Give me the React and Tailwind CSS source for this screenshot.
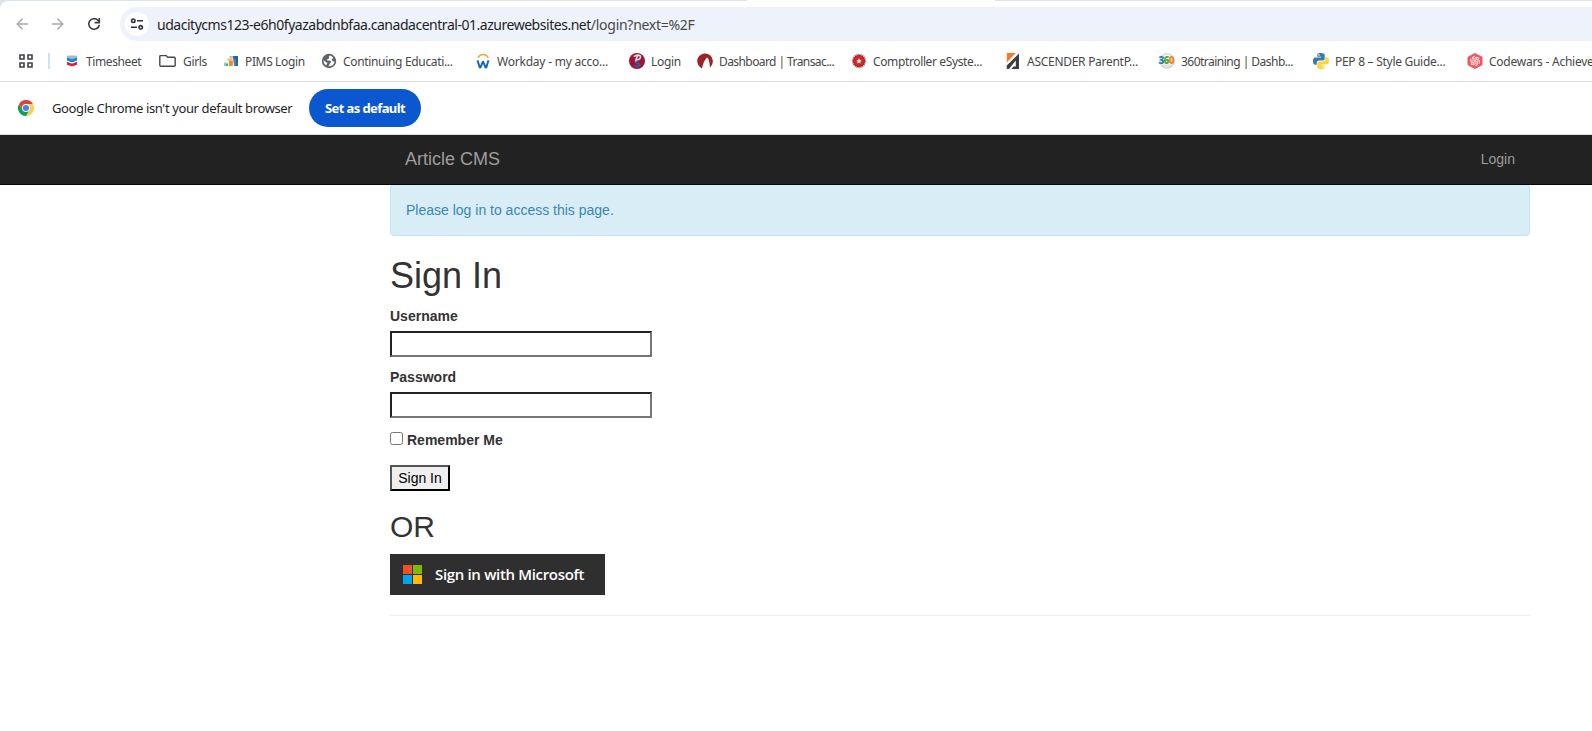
const Chevron = () => (
  <svg width="16" height="16" viewBox="0 0 16 16">
    <path d="M3 2.500h10v3L8 7 3 5.500z" fill="#a9bccb" />
    <path d="M3 4.500l5 1.800 5-1.800v3L8 9.500 3 7.500z" fill="#0a8fd4" />
    <path d="M3 8.800l5 1.900 5-1.900v3L8 13.600l-5-1.800z" fill="#d8213b" />
  </svg>
);

const Folder = () => (
  <svg className="overflow-visible" width="16" height="16" viewBox="0 0 16 16" fill="none" stroke="#474747" strokeWidth="1.400">
    <path d="M-1.200 4V12.200q0 1 1 1H13.200q1 0 1-1V5.300q0-1-1-1H6.800L5.200 2.600H-.2q-1 0-1 1z" />
  </svg>
);

const Pims = () => (
  <svg width="16" height="16" viewBox="0 0 16 16">
    <path d="M6.500 3H10v2.500H6.500z" fill="#a9c4dd" />
    <path d="M10 3h5v10h-4z" fill="#2d609b" />
    <path d="M11 6h2v7h-2z" fill="#4f81b5" />
    <path d="M4.500 5.500h5.200V13H6.500V8h-2z" fill="#f9b868" />
    <path d="M6 8h3.700v5H6z" fill="#f28c28" />
    <path d="M1 9.500h4V13H1z" fill="#8fd0c6" />
    <path d="M3 11h2v2H3z" fill="#3fa898" />
  </svg>
);

const Globe = () => (
  <svg width="16" height="16" viewBox="0 0 16 16">
    <circle cx="8" cy="8" r="7.200" fill="#5f6368" />
    <path d="M9.200 2.600c-1.600.4-1.800 1.500-.8 2.100-.3 1.200-1.900 1-2.500 1.900-.4.800.9 1 2 .9 1.500.1 2.500.7 2.300 1.800-.5.500-1.400.5-1.600 1.700-.2.900-.8 1.400-1.300 2.300 3.700.4 6-2 6.200-4.800-1.300.2-1.700-.5-2.300-1.100-.8-.7-.2-1.700.7-1.900.6-.2.200-1.500-2.700-2.900zM2.500 7.200c-.1 2 .7 4 2.900 5.200.3-1.200.3-1.900 1.100-2.500C5 9.600 4 7.800 2.500 7.200z" fill="#fff" />
  </svg>
);

const Workday = () => (
  <svg width="16" height="16" viewBox="0 0 16 16" fill="none">
    <path d="M2.900 4.900A5.700 5.700 0 0 1 13.300 4.900" stroke="#f5a425" strokeWidth="1.500" />
    <path d="M2.500 7.400l2.300 7.200h.6L8 8.400l2.600 6.200h.6l2.300-7.200" stroke="#1068b5" strokeWidth="1.900" strokeLinejoin="bevel" />
  </svg>
);

const LoginBadge = () => (
  <svg width="16" height="16" viewBox="0 0 16 16">
    <circle cx="8" cy="8" r="8" fill="#a31230" />
    <path d="M11.200 7.300q-4.200-.2-4.200 1.700t2.700 1.600q2.300 1.700-.6 2.700-2.900.5-3.600-1" fill="none" stroke="#2f5f9e" strokeWidth="1.900" />
    <path d="M4.800 3.600q3.300-2.400 6.400-.9 1.400 3-3 4.200M8.400 2.600L6.500 8.500" fill="none" stroke="#f3e4e8" strokeWidth="1.500" />
  </svg>
);

const Transact = () => (
  <svg width="16" height="16" viewBox="0 0 16 16">
    <path d="M5 15.400L3.200 14.300A7.800 7.800 0 1 1 14.200 13L12.900 14.400C12.800 11 12.200 8 11.200 5.800L10 4.400C7.500 7 5.800 11 5 15.400z" fill="#9b242b" />
  </svg>
);

const SEAL = Array.from({ length: 40 }, (_, i) => {
  const r = i % 2 ? 5.7 : 7.6;
  const a = (i * Math.PI) / 20;
  return `${(8 + r * Math.sin(a)).toFixed(2)},${(8 - r * Math.cos(a)).toFixed(2)}`;
}).join(" ");

const Seal = () => (
  <svg width="16" height="16" viewBox="0 0 16 16">
    <polygon points={SEAL} fill="#a32a2a" />
    <circle cx="8" cy="8" r="4.900" fill="#dd2424" />
    <path d="M8 5.300l.8 1.800 1.900.2-1.400 1.300.4 1.900L8 9.500l-1.700 1 .4-1.900-1.400-1.300 1.900-.2z" fill="#fff" />
  </svg>
);

const Ascender = () => (
  <svg width="16" height="16" viewBox="0 0 16 16">
    <path d="M1.800 0h9L1.800 9.600z" fill="#f47b2a" />
    <path d="M14 .4V16H6.500l2-2.600h2.300V7.500L3.900 16H1.800v-3.400z" fill="#3a3d41" />
  </svg>
);

const ThreeSixty = () => (
  <span className="relative block h-4 w-4">
    <svg className="absolute inset-0" width="16" height="16" viewBox="0 0 16 16">
      <circle cx="8" cy="8" r="7.200" fill="#f8f8f8" stroke="#c4c7ca" strokeWidth="1" />
      <path d="M2.500 12.200h11M4 14h8" stroke="#c4c7ca" strokeWidth=".8" />
    </svg>
    <span className="absolute top-[1px] left-[-0.5px] font-['Open_Sans',sans-serif] text-[10px] leading-[12px] font-extrabold tracking-[-0.8px]">
      <span className="text-[#1483c5]">3</span>
      <span className="text-[#55a630]">6</span>
      <span className="text-[#f58220]">0</span>
    </span>
  </span>
);

const Python = () => (
  <svg width="16" height="16" viewBox="0 0 16 16">
    <path d="M7.900 0C4.500 0 4.300 1.300 4.300 2.100v1.700h3.900v.6H2.300C.8 4.400 0 5.700 0 8c0 2.400.9 3.700 2.200 3.700h1.500V9.800c0-1.300 1-2.300 2.300-2.300h3.700c1.100 0 2-.9 2-2V2.100C11.700.7 10.400 0 7.900 0z" fill="#3b79ab" />
    <path d="M8.100 16c3.400 0 3.600-1.300 3.600-2.100v-1.700H7.800v-.6h5.900C15.200 11.600 16 10.300 16 8c0-2.400-.9-3.700-2.200-3.700h-1.500v1.900c0 1.300-1 2.300-2.300 2.300H6.300c-1.100 0-2 .9-2 2v3.400C4.300 15.300 5.600 16 8.100 16z" fill="#ffd43b" />
    <circle cx="6" cy="2" r=".8" fill="#fff" />
    <circle cx="10" cy="14" r=".8" fill="#fff" />
  </svg>
);

const Codewars = () => (
  <svg width="16" height="16" viewBox="0 0 16 16">
    <path d="M8 .5l7 3.700v7.600L8 15.500 1 11.800V4.200z" fill="#f4545c" stroke="#f4545c" strokeLinejoin="round" />
    <g fill="none" stroke="#ffe1e1" strokeWidth=".9">
      {[0, 60, 120, 180, 240, 300].map((a) => (
        <path key={a} transform={`rotate(${a} 8 8)`} d="M8 8q-1.600-1.500 0-3.200M8 4.800q1.900-1.500 3.600.3M6.300 6.200q-.6-2 1.500-3.400" />
      ))}
    </g>
  </svg>
);

const BOOKMARKS = [
  { label: "Timesheet", Icon: Chevron, width: "w-[97px]", tracking: "tracking-[-0.4px]" },
  { label: "Girls", Icon: Folder, width: "w-[62px]", tracking: "tracking-[-0.35px]" },
  { label: "PIMS Login", Icon: Pims, width: "w-[98px]", tracking: "tracking-[-0.36px]" },
  { label: "Continuing Educati...", Icon: Globe, width: "w-[154px]", tracking: "tracking-[-0.33px]" },
  { label: "Workday - my acco...", Icon: Workday, width: "w-[154px]", tracking: "tracking-[-0.22px]" },
  { label: "Login", Icon: LoginBadge, width: "w-[68px]", tracking: "tracking-[-0.3px]" },
  { label: "Dashboard | Transac...", Icon: Transact, width: "w-[154px]", tracking: "tracking-[-0.58px]" },
  { label: "Comptroller eSyste...", Icon: Seal, width: "w-[154px]", tracking: "tracking-[-0.37px]" },
  { label: "ASCENDER ParentP...", Icon: Ascender, width: "w-[154px]", tracking: "tracking-[-0.28px]" },
  { label: "360training | Dashb...", Icon: ThreeSixty, width: "w-[154px]", tracking: "tracking-[-0.52px]" },
  { label: "PEP 8 – Style Guide...", Icon: Python, width: "w-[154px]", tracking: "tracking-[-0.28px]" },
  { label: "Codewars - Achieve", Icon: Codewars, width: "w-[154px]", tracking: "tracking-[-0.25px]" },
];

function Toolbar() {
  return (
    <div className="flex h-[40px] items-center pt-[6px]">
      <div className="flex w-[120px] shrink-0 items-center pl-[15px]">
        <svg width="15" height="16" viewBox="0 0 15 16" fill="none" stroke="#a9abae" strokeWidth="1.500">
          <path d="M13 8H2.500M7.500 2.700L2.200 8l5.300 5.300" />
        </svg>
        <svg className="ml-[20px]" width="16" height="16" viewBox="0 0 16 16" fill="none" stroke="#a9abae" strokeWidth="1.500">
          <path d="M2 8h10.500M7.500 2.700L12.800 8l-5.300 5.300" />
        </svg>
        <svg className="ml-[20px]" width="16" height="16" viewBox="0 0 16 16" fill="none" stroke="#3c3f42" strokeWidth="1.600">
          <path d="M13.300 8.800A5.300 5.300 0 1 1 11.900 4.300L13.500 6" />
          <path d="M13.300 1.900v4.700H8.600" />
        </svg>
      </div>
      <div className="flex h-[34px] flex-1 items-center rounded-l-full bg-[#edf2fb] pl-[5px]">
        <span className="flex h-6 w-6 items-center justify-center rounded-full bg-white">
          <svg width="14" height="14" viewBox="0 0 14 14" fill="none" stroke="#303236" strokeWidth="1.600">
            <circle cx="3.300" cy="3.700" r="1.700" />
            <path d="M7 3.700h6M1 10.300h6" />
            <circle cx="10.700" cy="10.300" r="1.700" />
          </svg>
        </span>
        <span className="ml-[8px] font-['Noto_Sans',sans-serif] text-[14px] whitespace-nowrap">
          <span className="tracking-[-0.47px] text-[#1f1f1f]">
            udacitycms123-e6h0fyazabdnbfaa.canadacentral-01.azurewebsites.net
          </span>
          <span className="tracking-[-0.28px] text-[#474747]">/login?next=%2F</span>
        </span>
      </div>
    </div>
  );
}

function BookmarkBar() {
  return (
    <div className="flex h-[41px] items-center overflow-hidden border-b border-[#dadce0]">
      <svg className="ml-[18px] shrink-0" width="16" height="16" viewBox="0 0 16 16" fill="none" stroke="#3f4245" strokeWidth="1.600">
        <path d="M2 2h4v4H2zM10 2h4v4h-4zM2 10h4v4H2zM10 10h4v4h-4z" />
      </svg>
      <span className="ml-[14px] h-4 w-[2px] shrink-0 bg-[#cfe0fb]" />
      <div className="flex pl-[14px] font-['Noto_Sans',sans-serif] text-[12px] text-[#474747]">
        {BOOKMARKS.map(({ label, Icon, width, tracking }) => (
          <div key={label} className={`flex h-4 shrink-0 items-center ${width}`}>
            <span className="h-4 w-4 shrink-0">
              <Icon />
            </span>
            <span className={`ml-[6px] pt-px leading-4 whitespace-nowrap ${tracking}`}>{label}</span>
          </div>
        ))}
      </div>
    </div>
  );
}

function DefaultBrowserBar() {
  return (
    <div className="flex h-[53px] items-center border-b border-[#dadce0] pl-[18px] font-['Noto_Sans',sans-serif] text-[13px]">
      <svg width="16" height="16" viewBox="0 0 48 48">
        <path d="M24 12H44.800A24 24 0 0 1 24 48L34.400 30z" fill="#fdd04c" />
        <path d="M34.400 30L24 48A24 24 0 0 1 3.200 12L13.600 30z" fill="#109d58" />
        <path d="M13.600 30L3.200 12A24 24 0 0 1 44.800 12H24z" fill="#dd4436" />
        <circle cx="24" cy="24" r="12" fill="#fff" />
        <circle cx="24" cy="24" r="9.200" fill="#4285f4" />
      </svg>
      <span className="ml-[18px] w-[257px] pt-[2px] tracking-[-0.38px] whitespace-nowrap text-[#1f1f1f]">
        Google Chrome isn't your default browser
      </span>
      <button className="flex h-[38px] w-[112px] items-center justify-center rounded-full bg-[#0b57d0] pt-px text-[13px] font-bold tracking-[-0.6px] whitespace-nowrap text-white">
        Set as default
      </button>
    </div>
  );
}

function Field({ label }) {
  return (
    <label className="block h-[61px]">
      <span className="block h-[25px] leading-5 font-bold">{label}</span>
      <input className="block h-[26px] w-[262px] border-2 border-t-[#222] border-r-[#767676] border-b-[#767676] border-l-[#222] bg-white px-[2px] outline-none" />
    </label>
  );
}

export default function App() {
  return (
    <div className="h-[731px] w-[1592px] overflow-hidden bg-white">
      <div className="bg-[linear-gradient(90deg,#dbe3ec_0_747px,#fff_747px_995px,#dbe3ec_995px)]">
        <div className="flex h-[1px]" />
        <div className="rounded-tl-[8px] bg-white">
          <Toolbar />
          <BookmarkBar />
          <DefaultBrowserBar />
        </div>
      </div>

      <div className="font-['Liberation_Sans',Arial,sans-serif] text-[14px] text-[#333]">
        <nav className="relative z-10 flex h-[50px] items-center justify-between border-b border-[#080808] bg-[#222] pr-[77px] pb-[2px] pl-[405px] text-[#9d9d9d]">
          <span className="text-[18px] leading-5">Article CMS</span>
          <span className="leading-5">Login</span>
        </nav>
        <main className="-mt-px ml-[390px] w-[1140px]">
          <div className="h-[52px] rounded-[4px] border border-[#bce8f1] bg-[#d9edf7] p-[15px] leading-5 text-[#3a87ad]">
            Please log in to access this page.
          </div>
          <h1 className="mt-[20px] h-[50px] text-[36px] leading-[40px] font-medium">Sign In</h1>
          <Field label="Username" />
          <Field label="Password" />
          <label className="flex h-[37px] pt-[2px]">
            <input type="checkbox" className="mt-[2px] h-[13px] w-[13px]" />
            <span className="ml-[4px] leading-5 font-bold">Remember Me</span>
          </label>
          <button className="block h-[26px] w-[60px] border-2 border-t-[#555] border-r-black border-b-black border-l-[#555] bg-[#efefef] text-center leading-[20px] text-black">
            Sign In
          </button>
          <h2 className="mt-[19px] h-[44px] text-[30px] leading-[33px]">OR</h2>
          <button className="flex h-[41px] w-[215px] items-center bg-[#2f2f2f] pl-[13px]">
            <svg width="19" height="19" viewBox="0 0 19 19">
              <path d="M0 0h9v9H0z" fill="#f25022" />
              <path d="M10 0h9v9h-9z" fill="#7fba00" />
              <path d="M0 10h9v9H0z" fill="#00a4ef" />
              <path d="M10 10h9v9h-9z" fill="#ffb900" />
            </svg>
            <span className="ml-[13px] font-['Open_Sans',sans-serif] text-[15px] font-semibold tracking-[-0.33px] whitespace-nowrap text-white">
              Sign in with Microsoft
            </span>
          </button>
          <hr className="mt-[20px] border-[#eee]" />
        </main>
      </div>
    </div>
  );
}
